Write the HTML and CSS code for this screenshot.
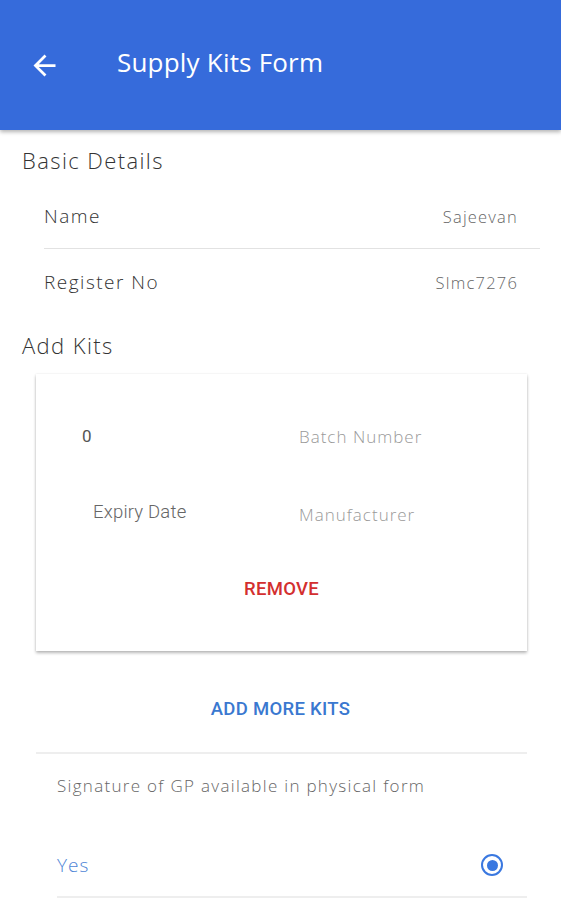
FILE: index.html
```html
<!DOCTYPE html>
<html>
<head>
<meta charset="utf-8">
<link rel="stylesheet" href="styles.css">
</head>
<body>
<header class="appbar">
  <svg class="back" width="33" height="33" viewBox="0 0 24 24"><path d="M20 11H7.83l5.59-5.59L12 4l-8 8 8 8 1.41-1.41L7.83 13H20v-2z" fill="#fff"/></svg>
  <h1 class="title">Supply Kits Form</h1>
</header>
<main class="content">
  <h2 class="section">Basic Details</h2>
  <div class="rows">
    <div class="row bordered"><span class="label">Name</span><span class="value">Sajeevan</span></div>
    <div class="row"><span class="label">Register No</span><span class="value">Slmc7276</span></div>
  </div>
  <h2 class="section kits">Add Kits</h2>
  <div class="card">
    <div class="grid">
      <span class="num">0</span><span class="ph">Batch Number</span>
      <span class="expiry">Expiry Date</span><span class="ph ph2">Manufacturer</span>
    </div>
    <div class="btn remove">REMOVE</div>
  </div>
  <div class="btn add">ADD MORE KITS</div>
  <div class="sig">
    <p class="sig-label">Signature of GP available in physical form</p>
    <div class="yes"><span>Yes</span><span class="radio"><span class="dot"></span></span></div>
  </div>
</main>
</body>
</html>
```
FILE: styles.css
```css
* { box-sizing: border-box; }
body { margin: 0; background: #fff; font-family: "Open Sans", "Lato", sans-serif; font-weight: 300; letter-spacing: 1px; color: #333; overflow: hidden; height: 900px; }
.appbar { height: 130px; background: #366bdb; display: flex; align-items: center; padding: 0 0 6px 28px; box-shadow: 0 2px 4px rgba(0,0,0,0.3); position: relative; }
.back { flex: none; margin-top: 6px; }
.title { margin: 0 0 0 56px; font-size: 26px; font-weight: 400; color: #fff; letter-spacing: 0.2px; }
.section { margin: 0; padding: 16px 0 0 22px; font-size: 22px; font-weight: 300; color: #333; line-height: 28px; letter-spacing: 1.4px; }
.rows { margin: 8px 21px 0 44px; }
.row { display: flex; justify-content: space-between; align-items: center; height: 66px; padding-right: 22px; }
.row.bordered { height: 67px; border-bottom: 1px solid #e2e2e2; padding-top: 2px; }
.label { font-size: 19px; color: #333; letter-spacing: 1.5px; }
.value { font-size: 16.5px; color: #666; letter-spacing: 1.2px; }
.section.kits { padding-top: 16px; }
.card { margin: 15px 34px 0 36px; height: 277px; box-shadow: 0 2px 3px rgba(0,0,0,0.28), 0 0 2px rgba(0,0,0,0.08); display: flex; flex-direction: column; }
.grid { display: grid; grid-template-columns: 263px 1fr; grid-template-rows: 48px 106px; padding-top: 38px; }
.num { padding-left: 46px; font-family: Roboto, sans-serif; font-weight: 400; letter-spacing: 0; font-size: 17px; color: #555; align-self: center; }
.ph { font-size: 17px; color: #999; align-self: center; letter-spacing: 1px; }
.expiry { padding-left: 57px; font-family: Roboto, sans-serif; font-weight: 300; letter-spacing: 0.2px; font-size: 18.5px; color: #666; align-self: center; margin-top: -3px; }
.ph2 { margin-top: 3px; }
.btn { font-family: Roboto, sans-serif; font-weight: 500; font-size: 18.5px; text-align: center; letter-spacing: 0.3px; line-height: 20px; }
.remove { color: #d32f2f; margin-top: 13px; }
.add { color: #3a78d0; margin-top: 48px; }
.sig { margin: 33px 34px 0 36px; border-top: 2px solid #eeeeee; padding-left: 21px; }
.sig-label { margin: 20px 0 0 0; font-size: 17px; color: #666; letter-spacing: 1.3px; }
.yes { display: flex; justify-content: space-between; align-items: center; height: 64px; border-bottom: 2px solid #eeeeee; color: #4f86d6; font-size: 19px; padding-right: 24px; margin-top: 37px; }
.radio { width: 22px; height: 22px; border: 2.5px solid #3a78e0; border-radius: 50%; display: flex; align-items: center; justify-content: center; }
.dot { width: 11px; height: 11px; border-radius: 50%; background: #3a78e0; }
```
